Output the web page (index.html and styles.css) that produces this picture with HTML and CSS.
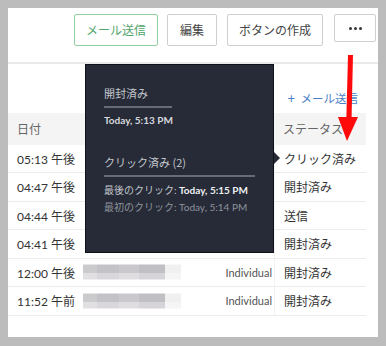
FILE: index.html
```html
<!DOCTYPE html>
<html lang="ja">
<head>
<meta charset="utf-8">
<link rel="stylesheet" href="styles.css">
</head>
<body>
<div class="panel">
  <div class="toolbar">
    <button class="btn btn-green">メール送信</button>
    <button class="btn">編集</button>
    <button class="btn">ボタンの作成</button>
    <button class="btn btn-more"><span class="dot"></span><span class="dot"></span><span class="dot"></span></button>
  </div>
  <div class="sep"></div>
  <div class="linkbar"><span class="plus">+</span> メール送信</div>
  <div class="table">
    <div class="row head"><div class="c1">日付</div><div class="c2"></div><div class="c3">ステータス</div></div>
    <div class="row"><div class="c1">05:13 午後</div><div class="c2"></div><div class="c3">クリック済み</div></div>
    <div class="row"><div class="c1">04:47 午後</div><div class="c2"></div><div class="c3">開封済み</div></div>
    <div class="row"><div class="c1">04:44 午後</div><div class="c2"></div><div class="c3">送信</div></div>
    <div class="row"><div class="c1">04:41 午後</div><div class="c2"></div><div class="c3">開封済み</div></div>
    <div class="row"><div class="c1">12:00 午後</div><div class="c2"><div class="blur"><i class="b1"></i><i class="b2"></i><i class="b3"></i><i class="b4"></i><i class="b5"></i></div><span class="ind">Individual</span></div><div class="c3">開封済み</div></div>
    <div class="row"><div class="c1">11:52 午前</div><div class="c2"><div class="blur"><i class="b1"></i><i class="b2"></i><i class="b3"></i><i class="b4"></i><i class="b5"></i></div><span class="ind">Individual</span></div><div class="c3">開封済み</div></div>
  </div>

  <div class="tooltip">
    <div class="tt-title">開封済み</div>
    <div class="tt-line short"></div>
    <div class="tt-strong">Today, 5:13 PM</div>
    <div class="tt-title tt-title2">クリック済み (2)</div>
    <div class="tt-line"></div>
    <div class="tt-row">最後のクリック: <b>Today, 5:15 PM</b></div>
    <div class="tt-row dim">最初のクリック: Today, 5:14 PM</div>
    <span class="tt-arrow"></span>
  </div>

  <svg class="red-arrow" width="30" height="90" viewBox="0 0 30 90">
    <path d="M10 0 L15 0 L13.6 62 L20 62 L9 86 L0 62 L8.4 62 Z" fill="#ff0a0a"/>
  </svg>
</div>
</body>
</html>
```
FILE: styles.css
```css
* { box-sizing: border-box; }
html, body { margin: 0; padding: 0; }
body {
  background: #bcbcbc;
  width: 386px;
  height: 346px;
  overflow: hidden;
  font-family: "Lato", "Noto Sans CJK JP", sans-serif;
  color: #333;
}
.panel {
  position: relative;
  margin: 8px 0 0 8px;
  width: 370px;
  height: 329px;
  background: #fff;
}
.toolbar {
  display: flex;
  justify-content: flex-end;
  align-items: flex-start;
  gap: 9px;
  padding: 6px 2px 0 0;
  height: 54px;
}
.btn {
  height: 32px;
  padding: 0 14px;
  background: #fff;
  border: 1px solid #cfcfcf;
  border-radius: 2px;
  font-family: "Noto Sans CJK JP", sans-serif;
  font-size: 12px;
  color: #444;
  line-height: 30px;
}
.btn-green {
  border-color: #92cfa1;
  color: #52a56a;
  width: 84px;
  padding: 0;
}
.toolbar .btn:nth-child(2) { width: 50px; padding: 0; }
.toolbar .btn:nth-child(3) { width: 96px; padding: 0; margin-left: 1px; }
.btn-more {
  width: 42px;
  height: 28px;
  padding: 0;
  margin-left: 2px;
  display: flex;
  align-items: center;
  justify-content: center;
  gap: 2px;
}
.dot {
  display: block;
  width: 3px;
  height: 3px;
  border-radius: 50%;
  background: #333;
}
.sep {
  height: 2px;
  background: #e9e9e9;
}
.linkbar {
  height: 49px;
  padding-right: 20px;
  text-align: right;
  font-family: "Noto Sans CJK JP", sans-serif;
  font-size: 11.5px;
  line-height: 18px;
  padding-top: 25px;
  color: #4a7fc8;
}
.plus { font-family: "Lato", sans-serif; font-size: 13px; margin-right: 3px; }
.table {
  width: 358px;
  font-family: "Lato", "Noto Sans CJK JP", sans-serif;
  font-size: 12px;
}
.row {
  display: grid;
  grid-template-columns: 75px 191px 92px;
  height: 28.5px;
  align-items: center;
  border-bottom: 1px solid #ececec;
}
.row.head {
  height: 31.5px;
  background: #f4f4f4;
  color: #666;
  border-bottom: none;
}
.c1 { padding-left: 9px; white-space: nowrap; }
.c2 { position: relative; height: 100%; display: flex; align-items: center; justify-content: flex-end; padding-right: 2px; }
.c3 { padding-left: 9px; white-space: nowrap; height: 100%; display: flex; align-items: center; border-left: 1px solid #f2f2f2; }
.row.head .c3 { border-left: none; }
.ind { font-size: 11px; color: #555; }
.blur {
  position: absolute;
  left: 0;
  top: 50%;
  transform: translateY(-50%);
  display: flex;
  height: 15px;
  width: 98px;
  filter: blur(0.4px);
}
.blur i { display: block; height: 100%; }
.b1 { width: 14px; background: linear-gradient(#cbcbcd 60%, #e1dfe2 60%); }
.b2 { width: 22px; background: linear-gradient(#c3c2c6 60%, #d9d7db 60%); }
.b3 { width: 20px; background: linear-gradient(#cac8cd 60%, #e0dde1 60%); }
.b4 { width: 26px; background: linear-gradient(#c0bfc3 60%, #d6d4d8 60%); }
.b5 { width: 16px; background: linear-gradient(#f0f0f0 60%, #f5f5f5 60%); }
.tooltip {
  position: absolute;
  left: 77px;
  top: 56px;
  width: 189px;
  height: 189px;
  background: #262b37;
  border: 1px solid #0f1218;
  padding: 20px 18px 0 18px;
  font-family: "Lato", "Noto Sans CJK JP", sans-serif;
  color: #c9ccd2;
}
.tt-title {
  font-family: "Noto Sans CJK JP", sans-serif;
  font-size: 11px;
  line-height: 16px;
  color: #c3c6cc;
}
.tt-title2 { margin-top: 27px; }
.tt-line {
  height: 2px;
  background: #666b75;
  margin: 5px 0 5px;
  width: 151px;
}
.tt-line.short { width: 68px; }
.tt-strong {
  font-size: 10px;
  font-weight: 700;
  color: #d6d8dc;
  line-height: 14px;
}
.tt-row {
  font-size: 10px;
  line-height: 17px;
  color: #c3c6cc;
  white-space: nowrap;
}
.tt-row b { color: #eef0f2; font-weight: 700; }
.tt-row.dim { color: #8e939c; }
.tt-arrow {
  position: absolute;
  right: -7px;
  top: 87px;
  width: 0;
  height: 0;
  border-top: 6px solid transparent;
  border-bottom: 6px solid transparent;
  border-left: 6px solid #262b37;
}
.red-arrow {
  position: absolute;
  left: 330px;
  top: 47px;
}
```
